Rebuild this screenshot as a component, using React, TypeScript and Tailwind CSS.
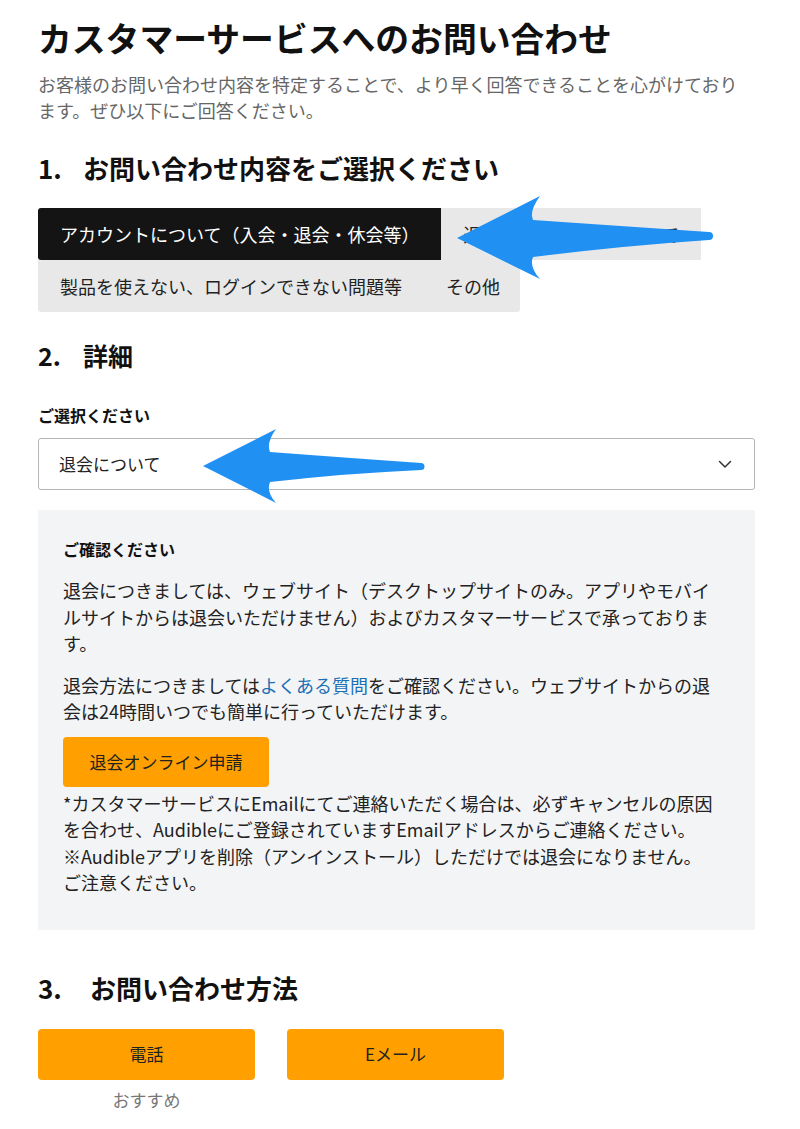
import React from "react";

const font = { fontFamily: '"Noto Sans CJK JP", "Noto Sans", sans-serif' };

export default function App() {
  return (
    <div className="relative w-[800px] h-[1129px] bg-white text-[#111] overflow-hidden" style={font}>
      <div className="ml-[38px] w-[717px] pt-[16px]">
        <h1 className="text-[33.8px] leading-[44px] font-bold tracking-[0px] whitespace-nowrap">
          カスタマーサービスへのお問い合わせ
        </h1>
        <p className="mt-[11px] text-[18px] leading-[26px] text-[#666]">
          お客様のお問い合わせ内容を特定することで、より早く回答できることを心がけております。ぜひ以下にご回答ください。
        </p>

        <h2 className="mt-[28px] flex text-[26px] leading-[34px] font-bold">
          <span className="w-[45px]">1.</span>
          <span>お問い合わせ内容をご選択ください</span>
        </h2>

        <div className="mt-[23px] flex flex-wrap">
          <div className="h-[52px] flex items-center px-[22px] bg-[#141414] text-white text-[18px] rounded-l-[3px] whitespace-nowrap">
            アカウントについて（入会・退会・休会等）
          </div>
          <div className="h-[52px] flex items-center px-[22px] bg-[#e8e8e8] text-[#222] text-[18px] whitespace-nowrap">
            返品・交換・返金について
          </div>
          <div className="h-[52px] flex items-center px-[22px] bg-[#e8e8e8] text-[#222] text-[18px] whitespace-nowrap rounded-bl-[3px]">
            製品を使えない、ログインできない問題等
          </div>
          <div className="h-[52px] flex items-center pl-[22px] pr-[20px] bg-[#e8e8e8] text-[#222] text-[18px] whitespace-nowrap rounded-br-[3px]">
            その他
          </div>
        </div>

        <h2 className="mt-[26px] flex text-[25px] leading-[34px] font-bold">
          <span className="w-[45px]">2.</span>
          <span>詳細</span>
        </h2>

        <div className="mt-[31px] text-[16px] leading-[24px] font-bold">ご選択ください</div>

        <div className="mt-[11px] h-[52px] border border-[#b5b5b5] rounded-[3px] flex items-center justify-between pl-[20px] pr-[22px] text-[17px] text-[#222]">
          <span>退会について</span>
          <svg width="14" height="9" viewBox="0 0 14 9" fill="none">
            <path d="M1.5 1.5 L7 7 L12.5 1.5" stroke="#333" strokeWidth="1.5" strokeLinecap="round" strokeLinejoin="round" />
          </svg>
        </div>

        <div className="mt-[20px] bg-[#f3f4f6] pl-[25px] pr-[30px] pt-[27px] pb-[34px] text-[#222]">
          <div className="text-[16px] leading-[24px] font-bold text-[#111]">ご確認ください</div>
          <p className="mt-[16px] text-[18px] leading-[26.5px]">
            退会につきましては、ウェブサイト（デスクトップサイトのみ。アプリやモバイルサイトからは退会いただけません）およびカスタマーサービスで承っております。
          </p>
          <p className="mt-[15px] text-[18px] leading-[26.5px]">
            退会方法につきましては<a className="text-[#1b6fb5]">よくある質問</a>をご確認ください。ウェブサイトからの退会は24時間いつでも簡単に行っていただけます。
          </p>
          <div className="mt-[12px] inline-flex h-[50px] w-[206px] items-center justify-center rounded-[4px] bg-[#ff9f00] text-[17px] text-[#222]">
            退会オンライン申請
          </div>
          <p className="mt-[3px] text-[18px] leading-[26.5px]">
            *カスタマーサービスにEmailにてご連絡いただく場合は、必ずキャンセルの原因を合わせ、Audibleにご登録されていますEmailアドレスからご連絡ください。
            <br />
            ※Audibleアプリを削除（アンインストール）しただけでは退会になりません。
            <br />
            ご注意ください。
          </p>
        </div>

        <h2 className="mt-[41px] flex text-[26px] leading-[34px] font-bold">
          <span className="w-[52px]">3.</span>
          <span>お問い合わせ方法</span>
        </h2>

        <div className="mt-[24px] flex gap-[32px]">
          <div className="flex flex-col items-center w-[217px]">
            <div className="h-[51px] w-full flex items-center justify-center rounded-[4px] bg-[#ff9f00] text-[17px] text-[#222]">
              電話
            </div>
            <div className="mt-[8px] text-[17px] leading-[24px] text-[#777]">おすすめ</div>
          </div>
          <div className="h-[51px] w-[217px] flex items-center justify-center rounded-[4px] bg-[#ff9f00] text-[17px] text-[#222]">
            Eメール
          </div>
        </div>
      </div>

      <svg className="absolute left-0 top-0 pointer-events-none" width="800" height="1129" viewBox="0 0 800 1129">
        <path
          d="M457 238 L540 196 Q529 211 533 220 Q620 226 709 232 A4 4 0 0 1 709 240 Q620 246 533 257 Q529 267 540 279 Z"
          fill="#2190f3"
        />
        <path
          d="M203 466 L276 429 Q266 443 270 452 Q350 458 421 463 A3.5 3.5 0 0 1 421 470 Q350 473 270 482 Q266 492 276 503 Z"
          fill="#2190f3"
        />
      </svg>
    </div>
  );
}
